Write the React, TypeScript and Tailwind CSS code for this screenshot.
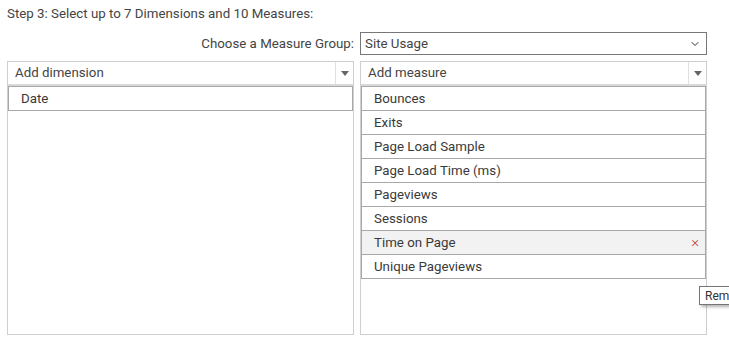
import { ChevronDown } from 'lucide-react'

const measures = [
    'Bounces',
    'Exits',
    'Page Load Sample',
    'Page Load Time (ms)',
    'Pageviews',
    'Sessions',
    'Time on Page',
    'Unique Pageviews',
]

function Caret() {
    return (
        <div className="w-[18px] h-full border-l border-[#e0e0e0] flex items-center justify-center">
            <svg width="8" height="5" viewBox="0 0 8 5">
                <path d="M0 0 H8 L4 5 Z" fill="#666" />
            </svg>
        </div>
    )
}

function Row({ label, hover }: { label: string; hover?: boolean }) {
    return (
        <div
            className={
                'h-[25px] -mt-px first:mt-0 border border-[#a8a8a8] flex items-center justify-between pl-[12px] pr-[6px] ' +
                (hover ? 'bg-[#f2f2f2]' : 'bg-white')
            }
        >
            <span>{label}</span>
            {hover && <span className="text-[#c0392b] text-[15px] font-light leading-none">×</span>}
        </div>
    )
}

export default function App() {
    return (
        <div className="relative w-[729px] h-[348px] bg-white text-[13.3px] text-[#3a3a3a] overflow-hidden font-['Roboto',sans-serif]">
            <div className="px-[7px] pt-[6px] leading-[16px] text-[#444]">
                Step 3: Select up to 7 Dimensions and 10 Measures:
            </div>

            {/* measure group */}
            <div className="flex items-center justify-end gap-[6px] mt-[10px] pr-[22px] text-[#444]">
                <span>Choose a Measure Group:</span>
                <div className="w-[347px] h-[23px] border border-[#777] flex items-center justify-between pl-[4px] pr-[5px]">
                    <span>Site Usage</span>
                    <ChevronDown className="w-[12px] h-[12px] text-[#333]" strokeWidth={2} />
                </div>
            </div>

            {/* columns */}
            <div className="flex gap-[6px] px-[7px] mt-[6px]">
                <div className="w-[347px] h-[274px] border border-[#cfcfcf] flex flex-col">
                    <div className="h-[24px] border-b-2 border-[#d9d9d9] flex items-center justify-between">
                        <span className="pl-[7px] text-[#444]">Add dimension</span>
                        <Caret />
                    </div>
                    <div>
                        <Row label="Date" />
                    </div>
                </div>

                <div className="w-[347px] h-[274px] border border-[#cfcfcf] flex flex-col">
                    <div className="h-[24px] border-b-2 border-[#d9d9d9] flex items-center justify-between">
                        <span className="pl-[7px] text-[#444]">Add measure</span>
                        <Caret />
                    </div>
                    <div className="flex flex-col">
                        {measures.map(m => (
                            <Row key={m} label={m} hover={m === 'Time on Page'} />
                        ))}
                    </div>
                </div>
            </div>

            {/* tooltip */}
            <div className="absolute left-[699px] top-[286px] h-[19px] pl-[5px] pr-[8px] bg-white border border-[#767676] shadow-[2px_2px_3px_rgba(0,0,0,0.3)] flex items-center text-[12px] text-[#333]">
                Remove
            </div>
        </div>
    )
}
